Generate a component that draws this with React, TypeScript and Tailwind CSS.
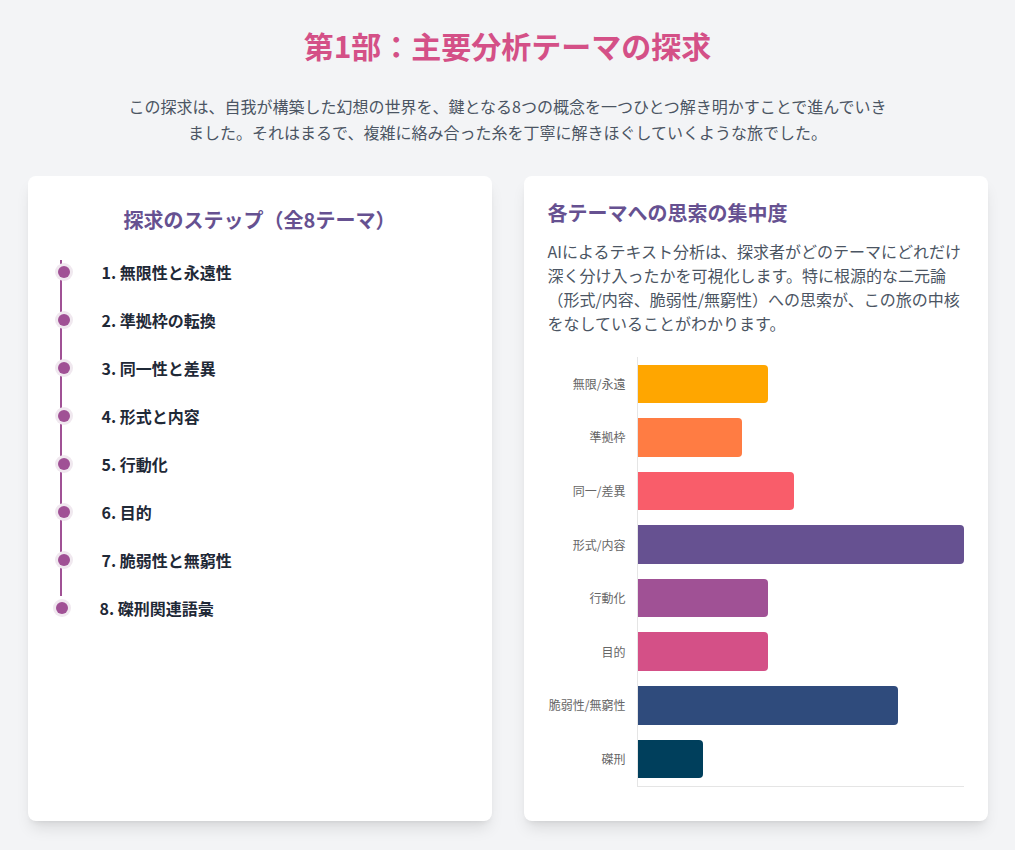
const steps = [
  "1. 無限性と永遠性",
  "2. 準拠枠の転換",
  "3. 同一性と差異",
  "4. 形式と内容",
  "5. 行動化",
  "6. 目的",
  "7. 脆弱性と無窮性",
  "8. 磔刑関連語彙",
];

const bars = [
  { label: "無限/永遠", value: 10, color: "#ffa600" },
  { label: "準拠枠", value: 8, color: "#ff7c43" },
  { label: "同一/差異", value: 12, color: "#f95d6a" },
  { label: "形式/内容", value: 25, color: "#665191" },
  { label: "行動化", value: 10, color: "#a05195" },
  { label: "目的", value: 10, color: "#d45087" },
  { label: "脆弱性/無窮性", value: 20, color: "#2f4b7c" },
  { label: "磔刑", value: 5, color: "#003f5c" },
];

const MAX = 25;

const font = { fontFamily: '"Noto Sans CJK JP", "Noto Sans", sans-serif' };

const App = () => {
  return (
    <div className="min-h-screen bg-[#f3f4f6] pt-[27px]" style={font}>
      <div className="max-w-[960px] mx-auto">
        <header className="text-center">
          <h1 className="text-3xl font-bold text-[#d45087] mb-[30px]">
            第1部：主要分析テーマの探求
          </h1>
          <p className="max-w-3xl mx-auto text-base leading-[26px] text-[#4b5563]">
            この探求は、自我が構築した幻想の世界を、鍵となる8つの概念を一つひとつ解き明かすことで進んでいきました。それはまるで、複雑に絡み合った糸を丁寧に解きほぐしていくような旅でした。
          </p>
        </header>

        <div className="grid grid-cols-2 gap-8 mt-[31px]">
          {/* steps */}
          <div className="bg-white rounded-lg shadow-lg px-8 pt-[30px] pb-8">
            <h2 className="text-xl font-bold text-[#665191] text-center mb-[26px]">
              探求のステップ（全8テーマ）
            </h2>
            <ul>
              {steps.map((s, i) => {
                const last = i === steps.length - 1;
                return (
                  <li
                    key={s}
                    className={
                      last
                        ? "relative pl-10 leading-6"
                        : "relative pl-10 pb-6 leading-6 border-l-2 border-[#a05195]"
                    }
                  >
                    <span className="absolute -left-[4px] top-[6px] w-3 h-3 rounded-full bg-[#a05195] ring-[3px] ring-[#f0e8ef]" />
                    <span className="text-base font-bold text-[#1f2937]">{s}</span>
                  </li>
                );
              })}
            </ul>
          </div>

          {/* chart */}
          <div className="bg-white rounded-lg shadow-lg px-6 pt-[23px] pb-6">
            <h2 className="text-xl font-bold text-[#665191] mb-3">
              各テーマへの思索の集中度
            </h2>
            <p className="text-base leading-6 text-[#4b5563]">
              AIによるテキスト分析は、探求者がどのテーマにどれだけ深く分け入ったかを可視化します。特に根源的な二元論（形式/内容、脆弱性/無窮性）への思索が、この旅の中核をなしていることがわかります。
            </p>
            <div className="mt-[22px] pb-[10px] flex">
              <div className="w-[89px] flex flex-col">
                {bars.map((b) => (
                  <div
                    key={b.label}
                    className="h-[53.6px] flex items-center justify-end pr-[11px] text-xs text-[#666666]"
                  >
                    {b.label}
                  </div>
                ))}
              </div>
              <div className="flex-1 flex flex-col border-l border-b border-[#e5e5e5]">
                {bars.map((b) => (
                  <div key={b.label} className="h-[53.6px] flex items-center">
                    <div
                      className="h-[38.6px] rounded-r-[4px]"
                      style={{ width: `${(b.value / MAX) * 100}%`, backgroundColor: b.color }}
                    />
                  </div>
                ))}
              </div>
            </div>
          </div>
        </div>
      </div>
    </div>
  );
};

export default App;
